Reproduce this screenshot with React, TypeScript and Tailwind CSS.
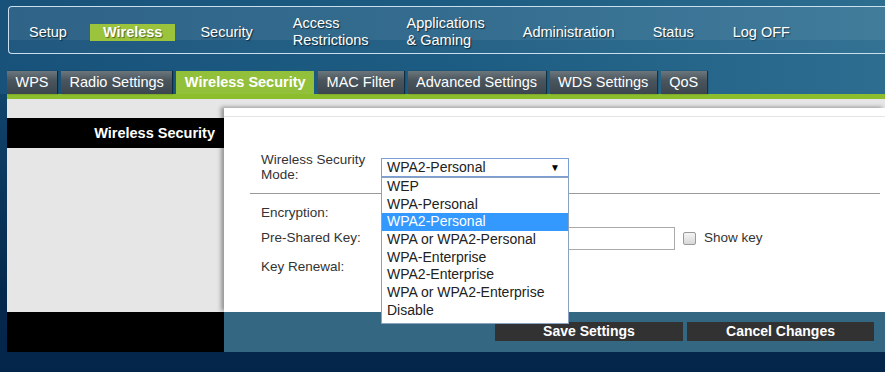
import React from "react";

const navItems = [
  { label: "Setup", ml: "ml-[20px]" },
  { label: "Wireless", ml: "ml-[23px]", active: true },
  { label: "Security", ml: "ml-[25px]" },
  { label: "Access\nRestrictions", ml: "ml-[40px]" },
  { label: "Applications\n& Gaming", ml: "ml-[38px]" },
  { label: "Administration", ml: "ml-[38px]" },
  { label: "Status", ml: "ml-[38px]" },
  { label: "Log OFF", ml: "ml-[39px]" },
];

const tabs = [
  { label: "WPS" },
  { label: "Radio Settings" },
  { label: "Wireless Security", active: true },
  { label: "MAC Filter" },
  { label: "Advanced Settings" },
  { label: "WDS Settings" },
  { label: "QoS" },
];

const modes = [
  "WEP",
  "WPA-Personal",
  "WPA2-Personal",
  "WPA or WPA2-Personal",
  "WPA-Enterprise",
  "WPA2-Enterprise",
  "WPA or WPA2-Enterprise",
  "Disable",
];

const App = () => {
  return (
    <div className="w-[885px] h-[372px] overflow-hidden font-['Liberation_Sans',Arial,sans-serif] bg-[linear-gradient(180deg,#1a5579_0%,#0f3f66_35%,#05284c_80%,#03254a_100%)]">
      {/* TOP NAV + TABS */}
      <div className="h-[94px] pt-[6px] bg-[linear-gradient(90deg,#18527a_0%,#1d5c82_50%,#2c6d90_100%)]">
        <div className="ml-[8px] h-[48px] border border-r-0 border-[#c9dfee] rounded-l-[4px] relative flex flex-col overflow-hidden">
          <div className="h-[33px] bg-white/10" />
          <div className="flex-1 bg-white/[0.04]" />
          <div className="absolute inset-0 flex items-center pt-[4px]">
            {navItems.map((item) =>
              item.active ? (
                <div
                  key={item.label}
                  className={`${item.ml} h-[17px] px-[13px] bg-[#9bc43c] text-white font-bold text-[14.5px] leading-[17px] [text-shadow:1px_1px_1px_rgba(0,0,0,0.45)]`}
                >
                  {item.label}
                </div>
              ) : (
                <div
                  key={item.label}
                  className={`${item.ml} whitespace-pre text-white text-[14.5px] leading-[17px] [text-shadow:1px_1px_1px_rgba(0,0,0,0.6)]`}
                >
                  {item.label}
                </div>
              )
            )}
          </div>
        </div>

        <div className="mt-[17px] ml-[7px] flex gap-[4px] h-[23px]">
          {tabs.map((tab) => (
            <div
              key={tab.label}
              className={
                tab.active
                  ? "px-[8.5px] bg-[#93c03a] text-white font-bold text-[14.5px] leading-[23px]"
                  : "px-[8.5px] bg-[linear-gradient(180deg,#6c767d_0%,#4a555d_40%,#3b464f_100%)] text-white text-[14.5px] leading-[23px] shadow-[1px_0_1px_rgba(0,0,0,0.5)]"
              }
            >
              {tab.label}
            </div>
          ))}
        </div>
      </div>

      {/* GREEN LINE */}
      <div className="ml-[7px] h-[5px] bg-[#8cbd2c]" />

      {/* CONTENT */}
      <div className="ml-[7px] flex h-[213px] bg-[#e6e6e6]">
        <div className="w-[217px] pt-[19px]">
          <div className="h-[30px] bg-black text-white font-bold text-[14.5px] leading-[30px] text-right pr-[9px]">
            Wireless Security
          </div>
        </div>

        <div className="flex-1 pt-[9px]">
          <div className="h-full bg-white shadow-[-3px_-1px_4px_rgba(0,0,0,0.35)] text-[#333] text-[13.5px]">
            <div className="h-[9px] border-b border-[#e4e4e4]" />

            {/* MODE ROW */}
            <div className="mt-[35px] pl-[37px] flex">
              <div className="w-[120px] leading-[15px]">
                Wireless Security
                <br />
                Mode:
              </div>
              <div className="relative mt-[6px] w-[188px] h-[19px] border border-[#7c9ed6] bg-white flex items-center justify-between pl-[5px] pr-[8px] text-[14px] text-[#222]">
                <span>WPA2-Personal</span>
                <span className="text-[10px] text-black">▼</span>

                {/* DROPDOWN */}
                <div className="absolute left-[-1px] top-[18px] w-[188px] pb-[3px] bg-white border border-[#8aa2c2] z-10">
                  {modes.map((mode) => (
                    <div
                      key={mode}
                      className={
                        mode === "WPA2-Personal"
                          ? "h-[17.7px] leading-[17.7px] pl-[5px] bg-[#3399ff] text-white"
                          : "h-[17.7px] leading-[17.7px] pl-[5px] text-[#222]"
                      }
                    >
                      {mode}
                    </div>
                  ))}
                </div>
              </div>
            </div>

            <div className="mt-[11px] ml-[26px] mr-[5px] h-px bg-[#9a9a9a]" />

            {/* FIELDS */}
            <div className="pl-[37px]">
              <div className="mt-[7px] h-[23px] leading-[23px]">Encryption:</div>
              <div className="mt-[3px] flex items-center h-[23px]">
                <div className="w-[120px]">Pre-Shared Key:</div>
                <div className="w-[294px] h-[23px] border border-[#aaa] bg-white" />
                <div className="ml-[8px] w-[13px] h-[13px] rounded-[2px] border border-[#9a9a9a] bg-[linear-gradient(180deg,#f4f4f4,#d8d8d8)]" />
                <div className="ml-[8px]">Show key</div>
              </div>
              <div className="mt-[5px] h-[23px] leading-[23px]">Key Renewal:</div>
            </div>
          </div>
        </div>
      </div>

      {/* BOTTOM BAR */}
      <div className="ml-[7px] flex h-[40px]">
        <div className="w-[217px] bg-black" />
        <div className="flex-1 bg-[#346882] pt-[10px] pl-[271px] flex gap-[4px]">
          <div className="w-[188px] h-[19px] bg-[#323232] text-white font-bold text-[14px] leading-[19px] text-center">
            Save Settings
          </div>
          <div className="w-[187px] h-[19px] bg-[#323232] text-white font-bold text-[14px] leading-[19px] text-center">
            Cancel Changes
          </div>
        </div>
      </div>
    </div>
  );
};

export default App;
